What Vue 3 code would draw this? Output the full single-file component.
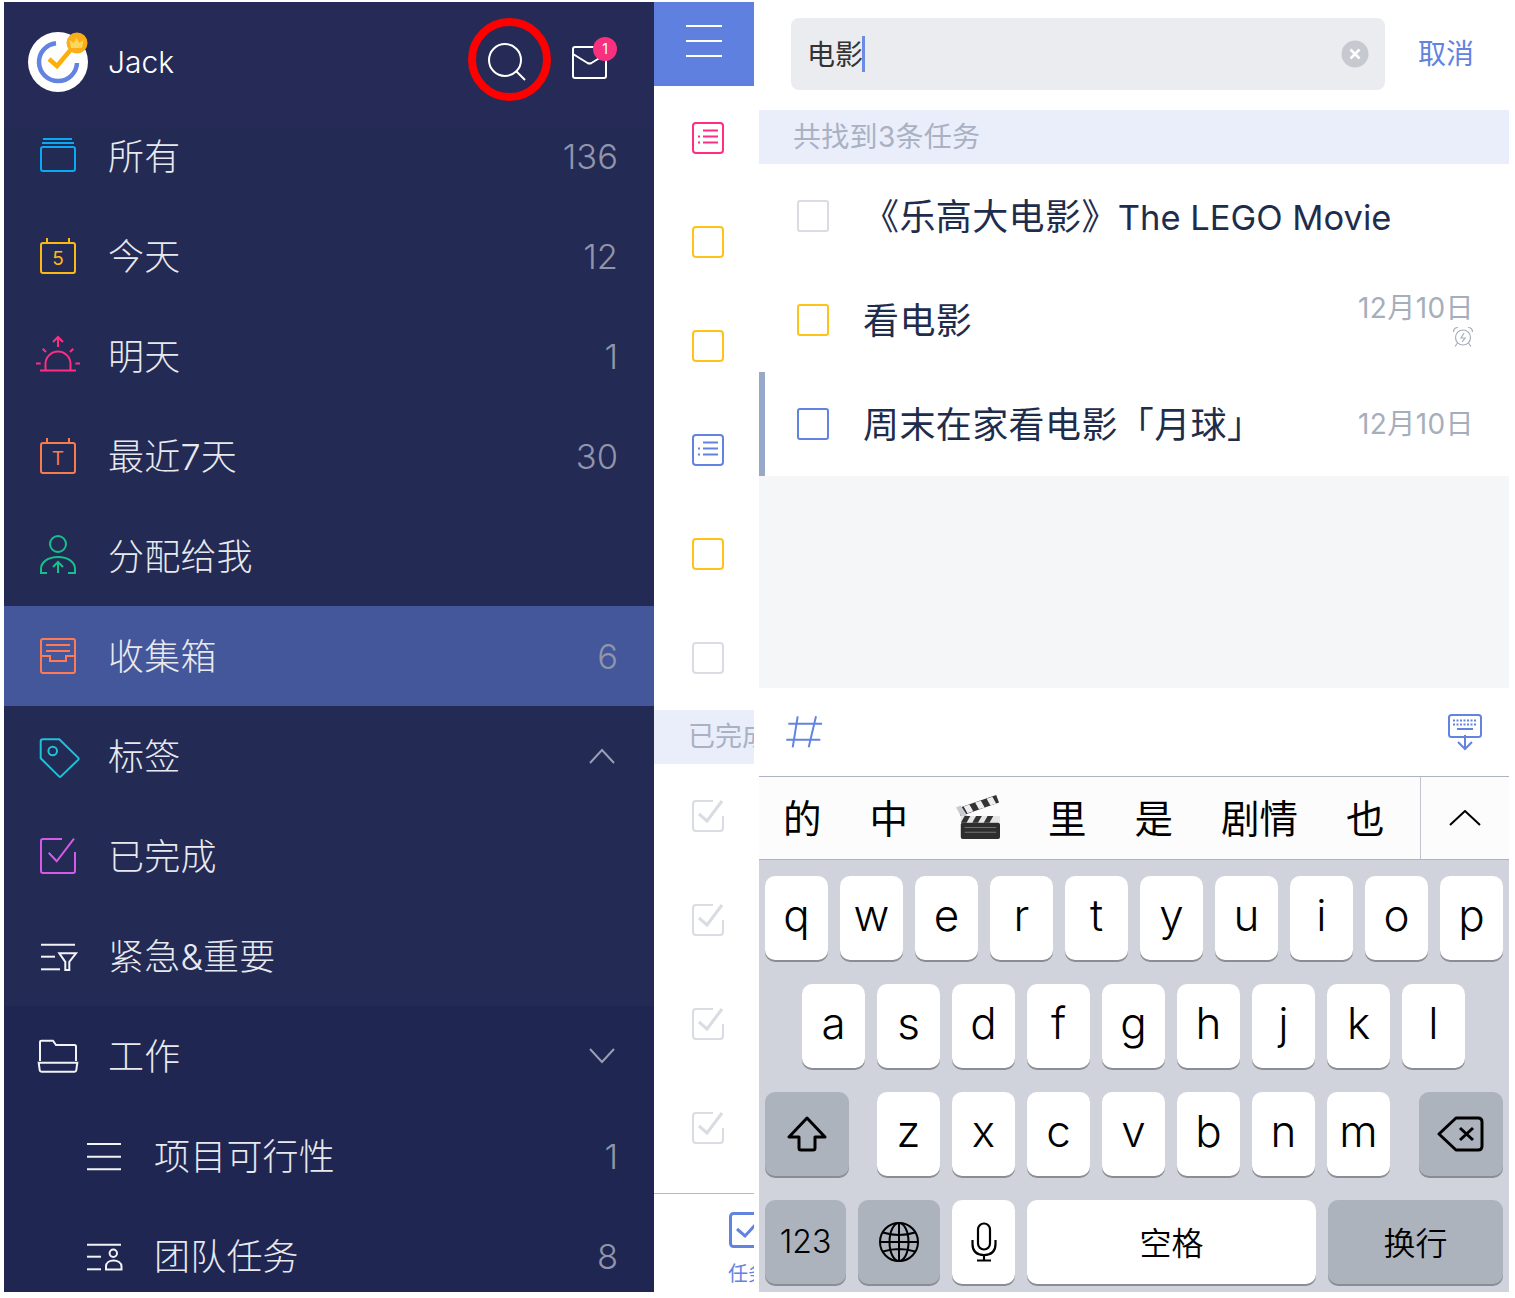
<template>
  <div class="page">
    <aside class="drawer">
      <header class="profile">
        <div class="avatar">
          <svg width="64" height="64" viewBox="0 0 64 64">
            <circle cx="30" cy="32" r="30" fill="#fff" />
            <path d="M28 13.200A19 19 0 1 0 49 33" fill="none" stroke="#6383e0" stroke-width="4.500" />
            <path d="M21 29l8 7 16-19" fill="none" stroke="#fdae0b" stroke-width="4.500" />
            <circle cx="49" cy="13" r="10.500" fill="#fbae17" />
            <path d="M43 18l-1.500-8 4 3 3-5 3 5 4-3-1.500 8z" fill="#ffd65c" />
          </svg>
        </div>
        <span class="name">Jack</span>
        <div class="search-btn">
          <svg width="44" height="44" viewBox="0 0 44 44" fill="none" stroke="#fff" stroke-width="2">
            <circle cx="20" cy="20" r="16" />
            <path d="M31.500 31.500L40 40" />
          </svg>
          <span class="red-ring"></span>
        </div>
        <div class="mail-btn">
          <svg width="38" height="36" viewBox="0 0 38 36" fill="none" stroke="#fff" stroke-width="2">
            <rect x="2" y="2" width="33" height="31" rx="2" />
            <path d="M2 9l14.500 9q2 1 4 0L35 9" />
          </svg>
          <span class="badge">1</span>
        </div>
      </header>

      <div
        v-for="item in menu"
        :key="item.label"
        class="menu-row"
        :class="{ active: item.active, group: item.group, sub: item.sub }"
      >
        <svg class="menu-icon" width="44" height="44" viewBox="0 0 44 44" fill="none" :stroke="item.color" stroke-width="2">
          <path v-for="d in item.paths" :key="d" :d="d" />
          <text v-if="item.glyph" x="22" y="31" text-anchor="middle" class="glyph" :fill="item.color" stroke="none">{{ item.glyph }}</text>
        </svg>
        <span class="menu-label">{{ item.label }}</span>
        <span v-if="item.count" class="menu-count">{{ item.count }}</span>
        <svg v-if="item.chevron" class="chevron" width="26" height="16" viewBox="0 0 26 16" fill="none" stroke="#9a9eb3" stroke-width="2">
          <path :d="item.chevron === 'up' ? 'M1 15L13 2l12 13' : 'M1 1l12 13L25 1'" />
        </svg>
      </div>
    </aside>

    <div class="behind">
      <div class="behind-top">
        <span></span><span></span><span></span>
      </div>
      <div v-for="(box, i) in topBoxes" :key="i" class="behind-row">
        <svg width="32" height="32" viewBox="0 0 32 32" fill="none" :stroke="box.color" stroke-width="2">
          <rect x="1" y="1" width="30" height="30" rx="3" />
          <path v-if="box.list" d="M11 8.500h15M11 14.500h15M11 20.500h15M6 14.500h2M6 20.500h2" />
        </svg>
      </div>
      <div class="behind-band">已完成</div>
      <div v-for="n in 4" :key="n" class="behind-row">
        <svg width="32" height="32" viewBox="0 0 32 32" fill="none" stroke="#d9dce3" stroke-width="2">
          <path d="M21 1H4Q1 1 1 4v24q0 3 3 3h24q3 0 3-3V16" />
          <path d="M7 14l8 7L30 1" stroke-width="3" />
        </svg>
      </div>
      <div class="behind-tab">
        <svg width="36" height="36" viewBox="0 0 36 36" fill="none" stroke="#6383e0" stroke-width="3">
          <rect x="1.500" y="1.500" width="33" height="33" rx="3" />
          <path d="M8 17l8 7 11-12" />
        </svg>
        <span>任务</span>
      </div>
    </div>

    <main class="search-panel">
      <div class="search-head">
        <div class="search-field">
          <span class="query">电影</span>
          <span class="caret"></span>
          <svg class="clear" width="28" height="28" viewBox="0 0 28 28">
            <circle cx="14" cy="14" r="13.500" fill="#c7c9d0" />
            <path d="M9.500 9.500l9 9M18.500 9.500l-9 9" stroke="#fff" stroke-width="2.500" />
          </svg>
        </div>
        <span class="cancel">取消</span>
      </div>
      <div class="result-count">共找到3条任务</div>

      <div v-for="task in tasks" :key="task.title" class="task" :class="{ marked: task.marked }">
        <span class="task-box" :style="{ borderColor: task.color }"></span>
        <span class="task-title">{{ task.title }}<span v-if="task.latin" class="latin">{{ task.latin }}</span></span>
        <div v-if="task.date" class="task-meta" :class="{ raised: task.alarm }">
          <span>{{ task.date }}</span>
          <svg v-if="task.alarm" width="22" height="22" viewBox="0 0 22 22" fill="none" stroke="#a6aebb" stroke-width="1.200">
            <circle cx="11" cy="11.500" r="7.500" />
            <path d="M1.500 6Q1.500 1.500 6 1.500M20.500 6q0-4.500-4.500-4.500M5.500 17l-2.500 3.500M16.500 17l2.500 3.500" />
            <path d="M12 7l-3 5h4l-3 4" />
          </svg>
        </div>
      </div>

      <div class="blank"></div>

      <div class="toolbar">
        <svg width="38" height="34" viewBox="0 0 38 34" fill="none" stroke="#6383e0" stroke-width="2">
          <path d="M3.300 8.700H37M1.300 24.700H35.300M12.700 1.300L7.700 32.300M31 1.300L23.700 32.300" />
        </svg>
        <svg width="36" height="38" viewBox="0 0 36 38" fill="none" stroke="#6383e0" stroke-width="2">
          <rect x="2" y="2" width="32" height="22" rx="2.500" />
          <path d="M6 7.500h24M6 11.500h24" stroke-dasharray="2 1.500" />
          <path d="M10 16h16" />
          <path d="M18 22v14M11 29l7 7 7-7" fill="#fff" />
        </svg>
      </div>

      <div class="candidates">
        <div class="candidate-list">
          <span>的</span>
          <span>中</span>
          <svg width="44" height="46" viewBox="0 0 46 48">
            <path d="M2 16L42 2l3 8L5 24z" fill="#333" />
            <path d="M8 14l6-2 4 7-6 2zM20 10l6-2 4 7-6 2zM32 6l6-2 4 7-6 2z" fill="#eee" />
            <path d="M0 15l5-2 7 11-5 3z" fill="#c9ccd0" />
            <rect x="5" y="24" width="41" height="7" fill="#e6e6e6" />
            <path d="M9 24h6l-4 7H5zM21 24h6l-4 7h-6zM33 24h6l-4 7h-6z" fill="#333" />
            <rect x="5" y="31" width="41" height="17" rx="2" fill="#2e2e2e" />
            <path d="M9 36h33M9 41h33" stroke="#777" stroke-width="1" />
          </svg>
          <span>里</span>
          <span>是</span>
          <span>剧情</span>
          <span>也</span>
        </div>
        <div class="candidate-more">
          <svg width="32" height="16" viewBox="0 0 32 16" fill="none" stroke="#000" stroke-width="2">
            <path d="M1 15L16 1l15 14" />
          </svg>
        </div>
      </div>

      <div class="keyboard">
        <div class="key-row">
          <span v-for="k in 'qwertyuiop'" :key="k" class="key">{{ k }}</span>
        </div>
        <div class="key-row centered">
          <span v-for="k in 'asdfghjkl'" :key="k" class="key">{{ k }}</span>
        </div>
        <div class="key-row">
          <span class="key dark wide icon-key">
            <svg width="42" height="36" viewBox="0 0 42 36" fill="none" stroke="#000" stroke-width="3">
              <path d="M21 2L3 21h10v11q0 2 2 2h12q2 0 2-2V21h10z" stroke-linejoin="round" />
            </svg>
          </span>
          <div class="key-group">
            <span v-for="k in 'zxcvbnm'" :key="k" class="key">{{ k }}</span>
          </div>
          <span class="key dark wide icon-key">
            <svg width="48" height="36" viewBox="0 0 48 36" fill="none" stroke="#000" stroke-width="3">
              <path d="M2 18L19 2h22q4 0 4 4v24q0 4-4 4H19z" stroke-linejoin="round" />
              <path d="M23 12l13 12M36 12L23 24" />
            </svg>
          </span>
        </div>
        <div class="key-row">
          <span class="key dark small-text num">123</span>
          <span class="key dark globe icon-key">
            <svg width="42" height="42" viewBox="0 0 42 42" fill="none" stroke="#000" stroke-width="2">
              <circle cx="21" cy="21" r="19" />
              <ellipse cx="21" cy="21" rx="9.500" ry="19" />
              <path d="M21 2v38M2 21h38M5 11.500q16 5 32 0M5 30.500q16-5 32 0" />
            </svg>
          </span>
          <span class="key icon-key">
            <svg width="26" height="40" viewBox="0 0 26 40" fill="none" stroke="#000" stroke-width="2.200">
              <rect x="7" y="1.500" width="12" height="26" rx="6" />
              <path d="M1.500 18v4q0 11 11.500 11t11.500-11v-4M13 33v5M6 38.500h14" />
            </svg>
          </span>
          <span class="key small-text space">空格</span>
          <span class="key dark small-text return">换行</span>
        </div>
      </div>
    </main>
  </div>
</template>

<script setup>
const white = '#f2f3f7'

const menu = [
  {
    label: '所有', count: '136', color: '#09a9f4',
    paths: ['M7 13h30q2 0 2 2v20q0 2-2 2H7q-2 0-2-2V15q0-2 2-2z', 'M7 5h29', 'M6 9h32'],
  },
  {
    label: '今天', count: '12', color: '#fdb913', glyph: '5',
    paths: ['M7 9h30q2 0 2 2v26q0 2-2 2H7q-2 0-2-2V11q0-2 2-2z', 'M11 4v5', 'M33 4v5'],
  },
  {
    label: '明天', count: '1', color: '#ff2d84',
    paths: ['M4 36.500h36', 'M9.500 36v-6a12.500 12.500 0 0 1 25 0v6', 'M22 3v10', 'M17 8l5-5 5 5', 'M6.700 14.700l3.300 3.300', 'M37.300 14.700L34 18', 'M0 29.500h4.700', 'M39.300 29.500H44'],
  },
  {
    label: '最近7天', count: '30', color: '#f97b4b', glyph: 'T',
    paths: ['M7 9h30q2 0 2 2v26q0 2-2 2H7q-2 0-2-2V11q0-2 2-2z', 'M11 4v5', 'M33 4v5'],
  },
  {
    label: '分配给我', color: '#15c08a',
    paths: ['M30 10a8 8 0 1 1-16 0a8 8 0 0 1 16 0z', 'M11 39H5v-4c0-7 7-12 17-12s17 5 17 12v4h-7', 'M22 28v11', 'M17 33l5-5 5 5'],
  },
  {
    label: '收集箱', count: '6', color: '#ff7a52', active: true,
    paths: ['M7 5h30q2 0 2 2v30q0 2-2 2H7q-2 0-2-2V7q0-2 2-2z', 'M10 11h24', 'M10 17h24', 'M5 22h9v5h16v-5h9'],
  },
  {
    label: '标签', color: '#1cc3d9', chevron: 'up',
    paths: ['M7 5.300h16.300l19 18.500q.7 1 0 1.800L25 42.400q-1 1-2 0L4.700 24.300V7.500q0-2.200 2.300-2.200z', 'M21 17a4.300 4.300 0 1 1-8.600 0a4.300 4.300 0 0 1 8.600 0z'],
  },
  {
    label: '已完成', color: '#d65ae8',
    paths: ['M26 5H7Q5 5 5 7v30q0 2 2 2h30q2 0 2-2V18', 'M12.700 18.700l8 8.600L38 4.700'],
  },
  {
    label: '紧急&重要', color: white,
    paths: ['M5 10.700h34', 'M5 22.700h14', 'M5 35.300h19', 'M23.300 19.300H40l-6.700 8.500V36h-4v-8.200z'],
  },
  {
    label: '工作', color: white, group: true, chevron: 'down',
    paths: ['M4 27V8q0-1.300 1.300-1.300H17l3 4.300h18.500q1.500 0 1.500 1.500V27', 'M2.700 28.700h38.600l-1 7.500q-.2 1.500-1.700 1.500H5.400q-1.500 0-1.700-1.500z'],
  },
  {
    label: '项目可行性', count: '1', color: white, group: true, sub: true,
    paths: ['M5 10h34', 'M5 22.700h34', 'M5 35.300h34'],
  },
  {
    label: '团队任务', count: '8', color: white, group: true, sub: true,
    paths: ['M5 10.700h34', 'M5 22.700h14', 'M5 35.300h14', 'M35 19.300a3.700 3.700 0 1 1-7.400 0a3.700 3.700 0 0 1 7.400 0z', 'M24 35.500v-3c0-4 3.500-6 7.500-6s8 2 8 6v3z'],
  },
]

const topBoxes = [
  { color: '#ff2d84', list: true },
  { color: '#ffc21a' },
  { color: '#ffc21a' },
  { color: '#6383e0', list: true },
  { color: '#ffc21a' },
  { color: '#d9dce3' },
]

const tasks = [
  { title: '《乐高大电影》', latin: 'The LEGO Movie', color: '#d9dce3' },
  { title: '看电影', color: '#ffc21a', date: '12月10日', alarm: true },
  { title: '周末在家看电影「月球」', color: '#6383e0', date: '12月10日', marked: true },
]
</script>

<style scoped>
.page {
  width: 1515px;
  height: 1298px;
  box-sizing: border-box;
  padding: 2px 6px 6px 4px;
  display: flex;
  overflow: hidden;
  background: #fff;
  font-family: Inter, "Noto Sans CJK SC", sans-serif;
}

.drawer {
  width: 650px;
  flex: none;
  background: linear-gradient(#252b56 125px, #232a54 125px);
  overflow: hidden;
}

.profile {
  height: 104px;
  display: flex;
  align-items: center;
  padding: 16px 45px 0 24px;
  box-sizing: border-box;
}

.avatar {
  width: 64px;
  height: 64px;
}

.name {
  margin-left: 16px;
  font-size: 30px;
  font-weight: 300;
  color: #fff;
}

.search-btn {
  position: relative;
  margin-left: auto;
  width: 44px;
  height: 44px;
}

.red-ring {
  position: absolute;
  left: -17px;
  top: -22px;
  width: 83px;
  height: 83px;
  box-sizing: border-box;
  border: 8px solid #ff0000;
  border-radius: 50%;
}

.mail-btn {
  position: relative;
  width: 38px;
  height: 36px;
  margin-left: 42px;
  margin-top: 2px;
}

.badge {
  position: absolute;
  left: 22px;
  top: -8px;
  width: 24px;
  height: 24px;
  border-radius: 50%;
  background: #f9307e;
  color: #fff;
  font-size: 14px;
  line-height: 24px;
  text-align: center;
}

.menu-row {
  height: 100px;
  display: flex;
  align-items: center;
  padding: 0 36px 0 32px;
  color: #e8e9ee;
}

.menu-row.active {
  background: #44579a;
}

.menu-row.group {
  background: #1f2651;
}

.menu-row.sub {
  padding-left: 78px;
}

.menu-icon {
  flex: none;
}

.menu-label {
  margin-left: 28px;
  padding-bottom: 4px;
  font-size: 36px;
  font-weight: 300;
  letter-spacing: 0.2px;
  flex: 1;
}

.menu-count {
  font-size: 34.500px;
  font-weight: 300;
  color: #9195ab;
}

.chevron {
  flex: none;
  margin-right: 3px;
}

.glyph {
  font-size: 19px;
  font-family: Inter, sans-serif;
}

.behind {
  width: 100px;
  flex: none;
  display: flex;
  flex-direction: column;
  overflow: hidden;
}

.behind-top {
  height: 84px;
  flex: none;
  background: #6080e0;
  display: flex;
  flex-direction: column;
  align-items: center;
  padding-top: 23px;
  box-sizing: border-box;
  gap: 13px;
}

.behind-top span {
  width: 36px;
  height: 2px;
  background: #fff;
}

.behind-row {
  height: 104px;
  flex: none;
  display: flex;
  align-items: center;
  justify-content: center;
  padding-left: 8px;
  box-sizing: border-box;
}

.behind-band {
  height: 54px;
  flex: none;
  padding-left: 34px;
  background: #eaeefa;
  font-size: 27px;
  line-height: 54px;
  color: #a9b1c3;
  white-space: nowrap;
  overflow: hidden;
}

.behind-tab {
  margin-top: 13px;
  border-top: 1px solid #b8b8b8;
  padding: 18px 0 0 75px;
  width: 100px;
  box-sizing: border-box;
  flex: 1;
  white-space: nowrap;
  color: #6383e0;
  font-size: 20px;
  line-height: 24px;
  overflow: hidden;
}

.behind-tab svg {
  display: block;
  margin-bottom: 14px;
}

.behind-tab span {
  display: block;
  margin-left: -1px;
}

.search-panel {
  width: 750px;
  flex: none;
  margin-left: 5px;
  display: flex;
  flex-direction: column;
  overflow: hidden;
}

.search-head {
  height: 108px;
  flex: none;
  display: flex;
  align-items: flex-start;
  padding: 16px 36px 0 32px;
  box-sizing: border-box;
}

.search-field {
  width: 594px;
  height: 72px;
  flex: none;
  background: #ebecf0;
  border-radius: 8px;
  display: flex;
  align-items: center;
  padding: 0 16px;
  box-sizing: border-box;
}

.query {
  padding-bottom: 2px;
  font-size: 28px;
  color: #333;
}

.caret {
  width: 3px;
  height: 36px;
  background: #6f8ce3;
  margin-left: -1px;
}

.clear {
  margin-left: auto;
}

.cancel {
  flex: none;
  margin-left: 33px;
  font-size: 28px;
  line-height: 72px;
  white-space: nowrap;
  color: #6383e0;
}

.result-count {
  height: 54px;
  flex: none;
  padding-left: 34px;
  background: #eaeefa;
  font-size: 28px;
  letter-spacing: 0.3px;
  line-height: 54px;
  color: #a9b1c3;
}

.task {
  height: 104px;
  flex: none;
  display: flex;
  align-items: center;
  padding: 0 35px 0 38px;
  box-sizing: border-box;
  position: relative;
  color: #1f2d4d;
}

.task.marked::before {
  content: "";
  position: absolute;
  left: 0;
  top: 0;
  bottom: 0;
  width: 6px;
  background: #98a8c8;
}

.task-box {
  width: 32px;
  height: 32px;
  flex: none;
  box-sizing: border-box;
  border: 2px solid;
  border-radius: 3px;
}

.task-title {
  margin-left: 34px;
  padding-bottom: 5px;
  font-size: 36px;
  letter-spacing: 0.4px;
  flex: 1;
  white-space: nowrap;
}

.latin {
  font-size: 34.500px;
  letter-spacing: 0;
}

.task-meta {
  display: flex;
  flex-direction: column;
  align-items: flex-end;
  font-size: 28px;
  letter-spacing: 0.4px;
  line-height: 36px;
  color: #a6aebb;
}

.task-meta.raised {
  margin-top: -2px;
}

.blank {
  flex: 1;
  background: #f5f6f8;
}

.toolbar {
  height: 88px;
  flex: none;
  display: flex;
  align-items: center;
  justify-content: space-between;
  padding: 0 26px;
  box-sizing: border-box;
}

.candidates {
  height: 84px;
  flex: none;
  border-top: 1px solid #aeb4c1;
  border-bottom: 1px solid #aeb4c1;
  box-sizing: border-box;
  display: flex;
  background: #fcfcfc;
}

.candidate-list {
  width: 661px;
  flex: none;
  display: flex;
  align-items: center;
  gap: 48px;
  padding: 0 0 5px 24px;
  box-sizing: border-box;
  font-size: 38.500px;
  color: #000;
  white-space: nowrap;
}

.candidate-more {
  flex: 1;
  border-left: 1px solid #c2c5cc;
  display: flex;
  align-items: center;
  justify-content: center;
}

.keyboard {
  height: 432px;
  flex: none;
  box-sizing: border-box;
  background: #d0d3db;
  padding: 16px 6px 0;
  display: flex;
  flex-direction: column;
  gap: 24px;
}

.key-row {
  display: flex;
  justify-content: space-between;
}

.key-row.centered {
  justify-content: center;
  gap: 12px;
  margin-left: -1px;
}

.key-group {
  display: flex;
  gap: 12px;
  margin-right: 1px;
}

.key {
  width: 63px;
  height: 84px;
  flex: none;
  box-sizing: border-box;
  display: flex;
  align-items: center;
  justify-content: center;
  padding-bottom: 6px;
  border-radius: 10px;
  background: #fff;
  box-shadow: 0 2px 0 #8a8d93;
  font-size: 44px;
  font-weight: 350;
  color: #000;
}

.key.icon-key {
  padding-bottom: 0;
}

.key.dark {
  background: #acb3bd;
}

.key.wide {
  width: 84px;
}

.key.small-text {
  padding-bottom: 2px;
  font-size: 32px;
}

.key.num {
  width: 81px;
}

.key.globe {
  width: 82px;
}

.key.space {
  width: 289px;
}

.key.return {
  width: 175px;
}
</style>

<style>
html,
body {
  margin: 0;
  background: #fff;
}
</style>
